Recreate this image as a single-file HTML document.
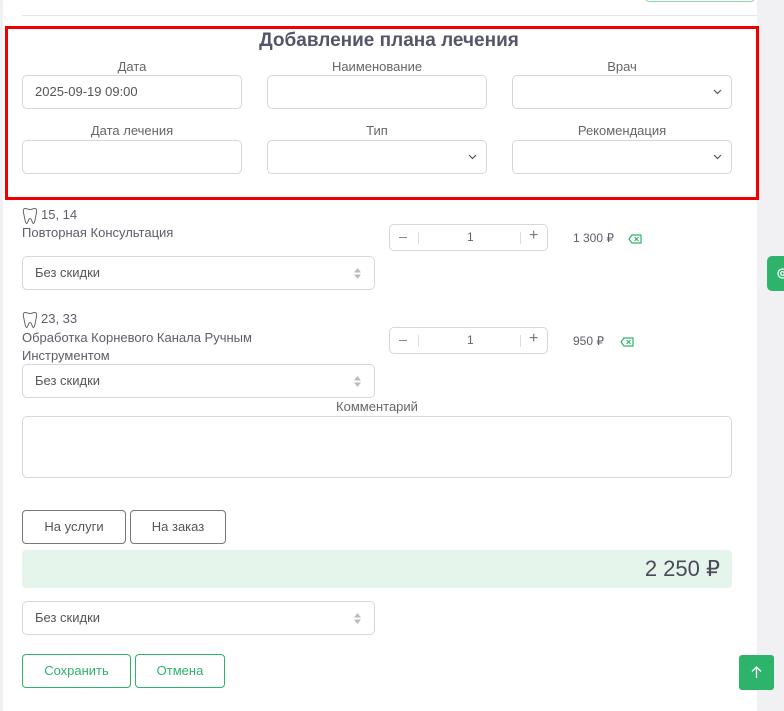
<!DOCTYPE html>
<html><head><meta charset="utf-8"><style>
*{box-sizing:border-box;margin:0;padding:0}
body{width:784px;height:711px;background:#f1f1f3;font-family:"Liberation Sans",sans-serif;color:#5d5d6b;position:relative;overflow:hidden}
.main{position:absolute;left:3px;top:0;width:754px;height:711px;background:#fff}
.a{position:absolute}
.inp{position:absolute;border:1px solid #d6d6de;border-radius:5px;background:#fff;height:34px;font-size:13px;color:#555;padding:0 12px;line-height:32px}
.lbl{position:absolute;font-size:13px;color:#666;text-align:center;width:220px}
.chev{position:absolute;right:9px;top:13px}
.ud{position:absolute;right:13px;top:11px}
.btn{position:absolute;border:1px solid #777;border-radius:4px;height:34px;font-size:13px;color:#555;text-align:center;line-height:32px}
.gbtn{position:absolute;border:1px solid #2db36a;border-radius:4px;height:34px;font-size:13px;color:#2db36a;text-align:center;line-height:32px}
.txt{position:absolute;font-size:13px;color:#5d5d6b}
.step{position:absolute;border:1px solid #d6d6de;border-radius:5px;width:159px;height:27px;font-size:12px;color:#666}
</style></head><body>
<div class="main"></div>
<div class="a" style="left:645px;top:-10px;width:110px;height:12px;border:1px solid #8fd6ad;border-radius:4px"></div>
<div class="a" style="left:22px;top:15px;width:735px;height:1px;background:#e6e6ec"></div>
<div class="a" style="left:5px;top:26px;width:754px;height:174px;border:3px solid #ef0000"></div>
<div class="a" style="left:0;top:30px;width:778px;text-align:center;font-size:19px;font-weight:bold;color:#55556a">Добавление плана лечения</div>
<div class="lbl" style="left:22px;top:59px">Дата</div>
<div class="lbl" style="left:267px;top:59px">Наименование</div>
<div class="lbl" style="left:512px;top:59px">Врач</div>
<div class="inp" style="left:22px;top:75px;width:220px">2025-09-19 09:00</div>
<div class="inp" style="left:267px;top:75px;width:220px"></div>
<div class="inp" style="left:512px;top:75px;width:220px"><svg class="chev" width="9" height="6" viewBox="0 0 9 6"><path d="M1 1l3.5 3.5L8 1" fill="none" stroke="#555" stroke-width="1.2"/></svg></div>
<div class="lbl" style="left:22px;top:123px">Дата лечения</div>
<div class="lbl" style="left:267px;top:123px">Тип</div>
<div class="lbl" style="left:512px;top:123px">Рекомендация</div>
<div class="inp" style="left:22px;top:140px;width:220px"></div>
<div class="inp" style="left:267px;top:140px;width:220px"><svg class="chev" width="9" height="6" viewBox="0 0 9 6"><path d="M1 1l3.5 3.5L8 1" fill="none" stroke="#555" stroke-width="1.2"/></svg></div>
<div class="inp" style="left:512px;top:140px;width:220px"><svg class="chev" width="9" height="6" viewBox="0 0 9 6"><path d="M1 1l3.5 3.5L8 1" fill="none" stroke="#555" stroke-width="1.2"/></svg></div>

<svg class="a" style="left:22px;top:207px" width="16" height="18" viewBox="0 0 16 18"><path d="M3 1.5C1 1.5 1 5 2 8c.7 2.5 1 8 2.5 8.5 1.5.4 1.5-5 3.5-5s2 5.4 3.5 5c1.5-.5 1.8-6 2.5-8.5 1-3 1-6.5-1-6.5-2 0-3 1-5 1s-3-1-5-1z" fill="none" stroke="#666" stroke-width="1"/></svg>
<div class="txt" style="left:41px;top:207px">15, 14</div>
<div class="txt" style="left:22px;top:225px">Повторная Консультация</div>
<div class="step" style="left:389px;top:224px"><span class="a" style="left:9px;top:12px;width:8px;height:1.3px;background:#888"></span><span class="a" style="left:28px;top:7px;width:1px;height:12px;background:#ddd"></span><span class="a" style="left:77px;top:5px">1</span><span class="a" style="left:130px;top:7px;width:1px;height:12px;background:#ddd"></span><span class="a" style="left:139px;top:2px;font-size:16px;color:#777">+</span></div>
<div class="txt" style="left:573px;top:231px;font-size:12px">1 300 ₽</div>
<svg class="a" style="left:628px;top:234px" width="14" height="10" viewBox="0 0 14 10"><path d="M4 1h9v8H4L1 5z" fill="none" stroke="#2db36a" stroke-width="1.2"/><path d="M6.5 3l4 4M10.5 3l-4 4" stroke="#2db36a" stroke-width="1.1"/></svg>
<div class="inp" style="left:22px;top:256px;width:353px">Без скидки<svg class="ud" width="7" height="11" viewBox="0 0 7 11"><path d="M0 4.5L3.5 0 7 4.5zM0 6.5L3.5 11 7 6.5z" fill="#bbb"/></svg></div>

<svg class="a" style="left:22px;top:311px" width="16" height="18" viewBox="0 0 16 18"><path d="M3 1.5C1 1.5 1 5 2 8c.7 2.5 1 8 2.5 8.5 1.5.4 1.5-5 3.5-5s2 5.4 3.5 5c1.5-.5 1.8-6 2.5-8.5 1-3 1-6.5-1-6.5-2 0-3 1-5 1s-3-1-5-1z" fill="none" stroke="#666" stroke-width="1"/></svg>
<div class="txt" style="left:41px;top:311px">23, 33</div>
<div class="txt" style="left:22px;top:329px;line-height:18px">Обработка Корневого Канала Ручным<br>Инструментом</div>
<div class="step" style="left:389px;top:327px"><span class="a" style="left:9px;top:12px;width:8px;height:1.3px;background:#888"></span><span class="a" style="left:28px;top:7px;width:1px;height:12px;background:#ddd"></span><span class="a" style="left:77px;top:5px">1</span><span class="a" style="left:130px;top:7px;width:1px;height:12px;background:#ddd"></span><span class="a" style="left:139px;top:2px;font-size:16px;color:#777">+</span></div>
<div class="txt" style="left:573px;top:334px;font-size:12px">950 ₽</div>
<svg class="a" style="left:620px;top:337px" width="14" height="10" viewBox="0 0 14 10"><path d="M4 1h9v8H4L1 5z" fill="none" stroke="#2db36a" stroke-width="1.2"/><path d="M6.5 3l4 4M10.5 3l-4 4" stroke="#2db36a" stroke-width="1.1"/></svg>
<div class="inp" style="left:22px;top:364px;width:353px">Без скидки<svg class="ud" width="7" height="11" viewBox="0 0 7 11"><path d="M0 4.5L3.5 0 7 4.5zM0 6.5L3.5 11 7 6.5z" fill="#bbb"/></svg></div>

<div class="a" style="left:22px;top:399px;width:710px;text-align:center;font-size:13px;color:#666">Комментарий</div>
<div class="inp" style="left:22px;top:416px;width:710px;height:62px"></div>

<div class="btn" style="left:22px;top:510px;width:104px">На услуги</div>
<div class="btn" style="left:130px;top:510px;width:96px">На заказ</div>
<div class="a" style="left:22px;top:550px;width:710px;height:38px;background:#e6f5ec;border-radius:4px;text-align:right;padding-right:12px;font-size:22px;line-height:38px;color:#4a4a5a">2 250 ₽</div>
<div class="inp" style="left:22px;top:601px;width:353px">Без скидки<svg class="ud" width="7" height="11" viewBox="0 0 7 11"><path d="M0 4.5L3.5 0 7 4.5zM0 6.5L3.5 11 7 6.5z" fill="#bbb"/></svg></div>
<div class="gbtn" style="left:22px;top:654px;width:109px">Сохранить</div>
<div class="gbtn" style="left:135px;top:654px;width:90px">Отмена</div>

<div class="a" style="left:739px;top:655px;width:35px;height:35px;background:#2db36a;border-radius:3px"><svg class="a" style="left:12px;top:11px" width="11" height="13" viewBox="0 0 11 13"><path d="M5.5 12V1M1 5.5l4.5-4.5 4.5 4.5" fill="none" stroke="#fff" stroke-width="1.3"/></svg></div>
<div class="a" style="left:767px;top:256px;width:20px;height:35px;background:#2db36a;border-radius:5px 0 0 5px"><svg class="a" style="left:9px;top:11px" width="13" height="13" viewBox="0 0 13 13"><circle cx="6.5" cy="6.5" r="4.5" fill="none" stroke="#fff" stroke-width="1.3"/><circle cx="6.5" cy="6.5" r="1.8" fill="none" stroke="#fff" stroke-width="1.2"/></svg></div>
</body></html>
